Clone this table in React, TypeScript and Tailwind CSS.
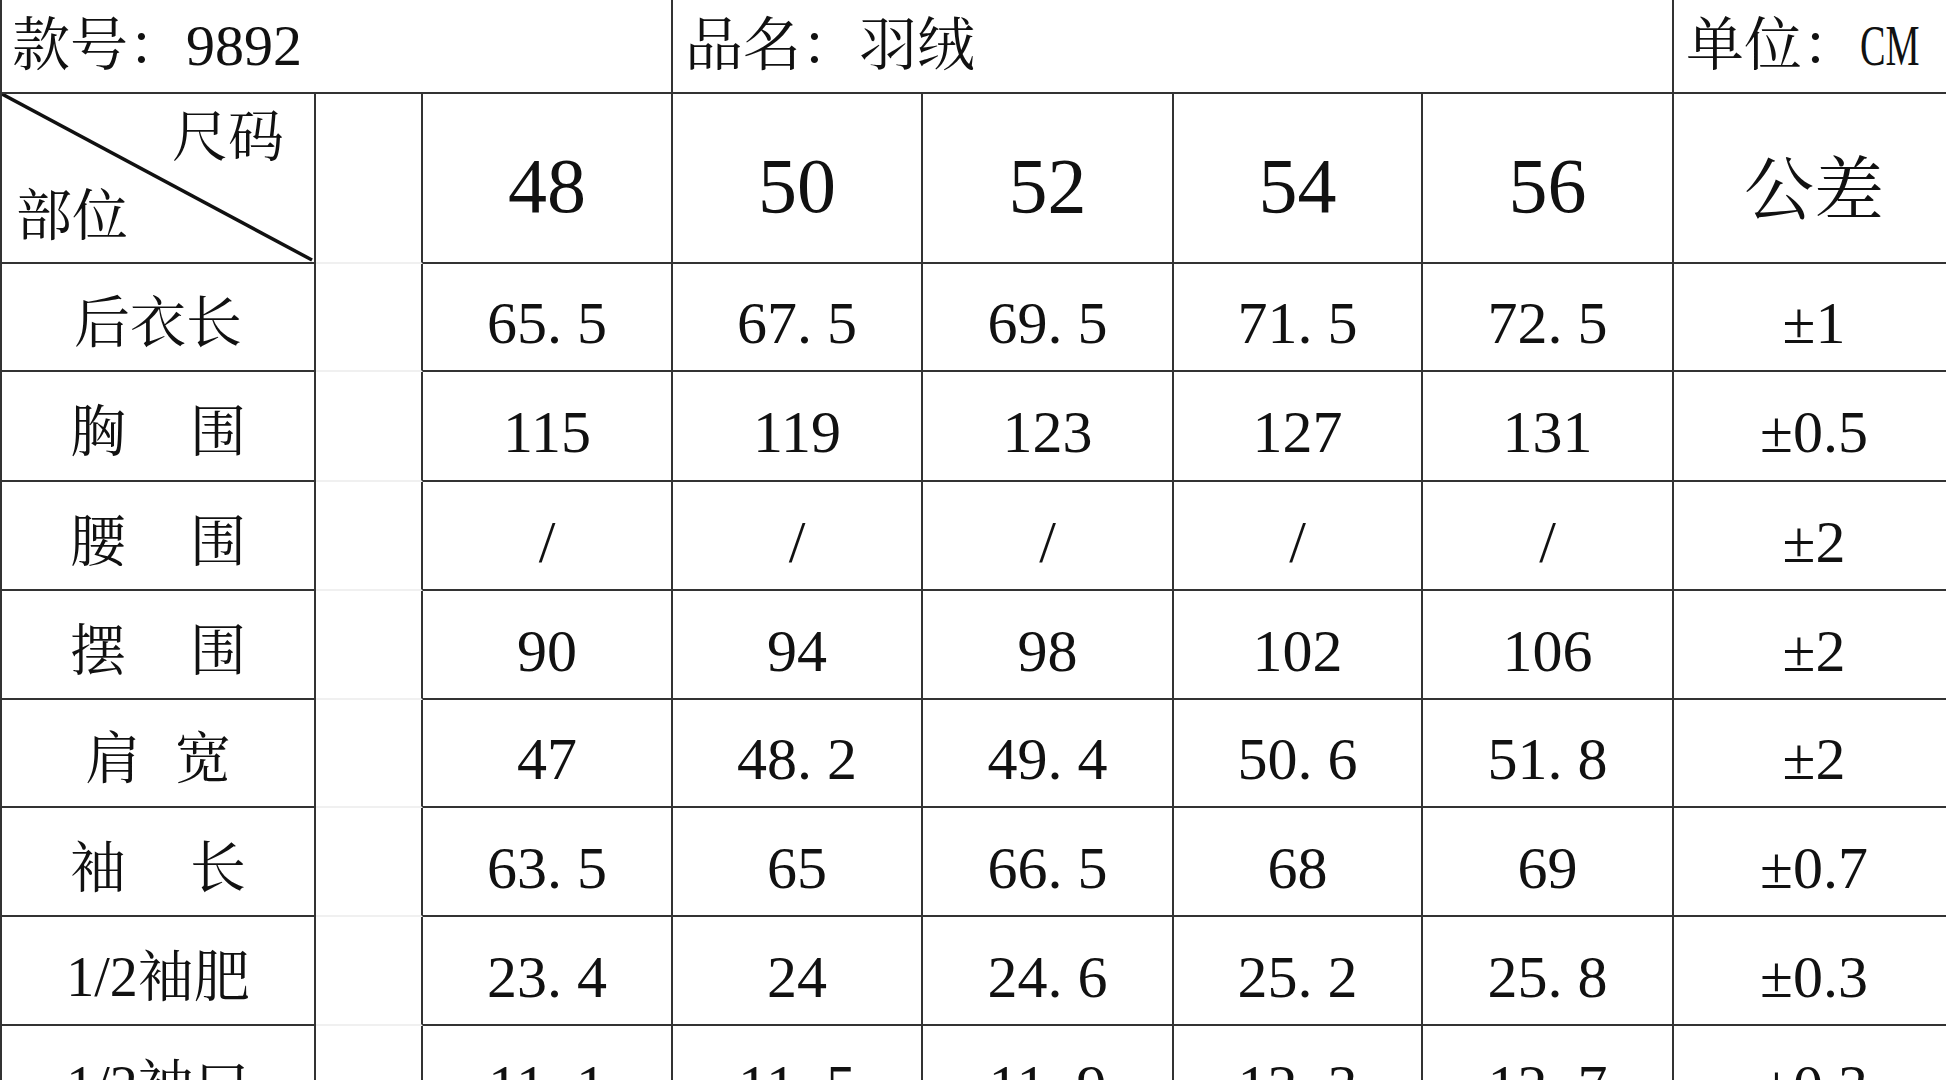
import React from "react";

const serif = "font-['Liberation_Serif','Noto_Serif_CJK_SC','Noto_Sans_CJK_SC',serif]";
const line = "border-[#333]";

const sizes = ["48", "50", "52", "54", "56"];

const rows = [
  { label: ["后衣长"], w: "", h: "h-[108px]", vals: ["65.5", "67.5", "69.5", "71.5", "72.5"], tol: "±1" },
  { label: ["胸", "围"], w: "w-[176px]", h: "h-[110px]", vals: ["115", "119", "123", "127", "131"], tol: "±0.5" },
  { label: ["腰", "围"], w: "w-[176px]", h: "h-[109px]", vals: ["/", "/", "/", "/", "/"], tol: "±2" },
  { label: ["摆", "围"], w: "w-[176px]", h: "h-[109px]", vals: ["90", "94", "98", "102", "106"], tol: "±2" },
  { label: ["肩", "宽"], w: "w-[146px]", h: "h-[108px]", vals: ["47", "48.2", "49.4", "50.6", "51.8"], tol: "±2" },
  { label: ["袖", "长"], w: "w-[176px]", h: "h-[109px]", vals: ["63.5", "65", "66.5", "68", "69"], tol: "±0.7" },
  { label: ["1/2袖肥"], w: "", h: "h-[109px]", vals: ["23.4", "24", "24.6", "25.2", "25.8"], tol: "±0.3" },
  { label: ["1/2袖口"], w: "", h: "h-[109px]", vals: ["11.1", "11.5", "11.9", "12.3", "12.7"], tol: "±0.3" },
];

// SimSun-like wide period: "65. 5"
function Num({ v }: { v: string }) {
  const parts = v.split(".");
  if (parts.length < 2) return <>{v}</>;
  return (
    <>
      {parts[0]}
      <span className="mr-[0.25em]">.</span>
      {parts[1]}
    </>
  );
}

export default function App() {
  return (
    <div className={`w-[1946px] h-[1080px] overflow-hidden bg-white text-[#111] ${serif}`}>
      <div className="grid w-[1954px] grid-cols-[316px_107px_250px_250px_251px_249px_251px_280px]">
        {/* title row */}
        <div className={`col-span-3 flex h-[94px] items-center border-b-2 border-l-2 border-r-2 ${line} pl-[10px] text-[58px] leading-none`}>
          款号：9892
        </div>
        <div className={`col-span-4 flex h-[94px] items-center border-b-2 border-r-2 ${line} pl-[12px] text-[58px] leading-none`}>
          品名：羽绒
        </div>
        <div className={`flex h-[94px] items-center border-b-2 ${line} pl-[12px] text-[58px] leading-none`}>
          <span>单位：</span>
          <span className="inline-block origin-left scale-x-[0.66]">CM</span>
        </div>

        {/* header row */}
        <div className={`relative flex h-[170px] flex-col justify-between border-b-2 border-l-2 border-r-2 ${line} pb-[18px] pt-[15px] text-[56px] leading-none`}>
          <svg className="absolute inset-0 h-full w-full" viewBox="0 0 316 170" preserveAspectRatio="none">
            <line x1="0" y1="0" x2="314" y2="168" stroke="#111" strokeWidth="3.5" />
          </svg>
          <span className="self-end pr-[30px]">尺码</span>
          <span className="self-start pl-[14px]">部位</span>
        </div>
        <div className={`h-[170px] border-b-2 border-b-[#f0f0f0] border-r-2 border-r-[#333]`} />
        {sizes.map((s) => (
          <div key={s} className={`flex h-[170px] items-center justify-center border-b-2 border-r-2 ${line} pt-4 text-[78px] leading-none`}>
            {s}
          </div>
        ))}
        <div className={`flex h-[170px] items-center justify-center border-b-2 ${line} pt-[28px] text-[70px] leading-none`}>
          公差
        </div>

        {/* data rows */}
        {rows.map((r) => (
          <React.Fragment key={r.label.join("")}>
            <div className={`flex ${r.h} items-center justify-center border-b-2 border-l-2 border-r-2 ${line} pt-3 text-[56px] leading-none`}>
              {r.label.length > 1 ? (
                <span className={`flex ${r.w} justify-between`}>
                  {r.label.map((c) => (
                    <span key={c}>{c}</span>
                  ))}
                </span>
              ) : (
                <span>{r.label[0]}</span>
              )}
            </div>
            <div className={`${r.h} border-b-2 border-b-[#f0f0f0] border-r-2 border-r-[#333]`} />
            {r.vals.map((v, i) => (
              <div key={i} className={`flex ${r.h} items-center justify-center border-b-2 border-r-2 ${line} pt-3 text-[60px] leading-none`}>
                <span>
                  <Num v={v} />
                </span>
              </div>
            ))}
            <div className={`flex ${r.h} items-center justify-center border-b-2 ${line} pt-3 text-[60px] leading-none`}>
              {r.tol}
            </div>
          </React.Fragment>
        ))}
      </div>
    </div>
  );
}
